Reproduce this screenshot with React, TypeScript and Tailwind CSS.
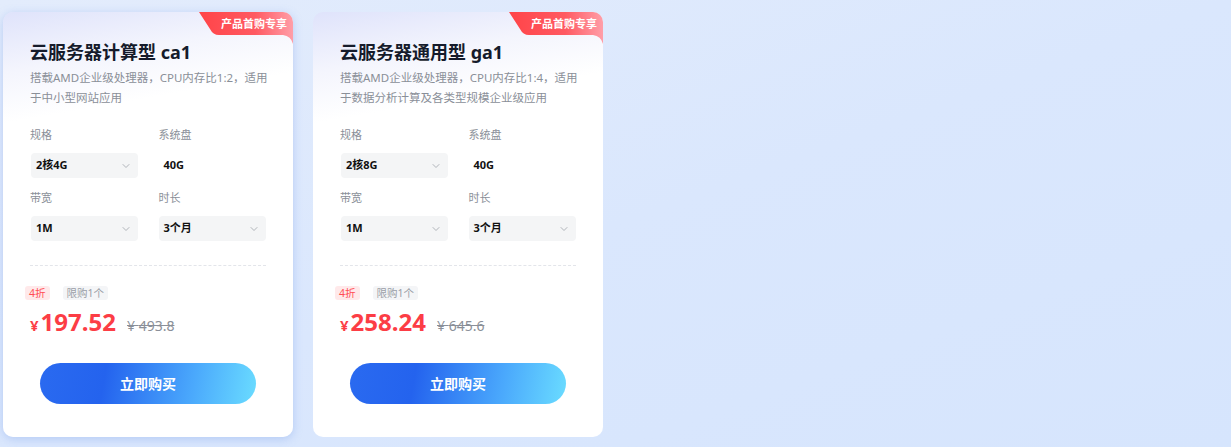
import { ChevronDown } from 'lucide-react';

const products = [
  {
    name: '云服务器计算型 ca1',
    desc: '搭载AMD企业级处理器，CPU内存比1:2，适用于中小型网站应用',
    spec: '2核4G',
    price: '197.52',
    origin: '493.8',
    active: true,
  },
  {
    name: '云服务器通用型 ga1',
    desc: '搭载AMD企业级处理器，CPU内存比1:4，适用于数据分析计算及各类型规模企业级应用',
    spec: '2核8G',
    price: '258.24',
    origin: '645.6',
    active: false,
  },
];

const SelectBox = ({ value }) => (
  <div className="flex h-[25px] items-center justify-between rounded-[4px] bg-[#f4f5f6] pl-[5px] pr-[6px]">
    <span className="text-[11px] font-bold text-[#111]">{value}</span>
    <ChevronDown size={12} strokeWidth={1.5} className="text-[#9a9ea6]" />
  </div>
);

const Badge = () => (
  <div className="absolute right-0 top-0 h-[32px] w-[94px]">
    <svg width="94" height="32" viewBox="0 0 94 32" className="absolute inset-0">
      <defs>
        <linearGradient id="badgeGrad" x1="0" y1="0" x2="1" y2="0">
          <stop offset="0%" stopColor="#ff4448" />
          <stop offset="60%" stopColor="#ff5a62" />
          <stop offset="100%" stopColor="#ff9ea8" />
        </linearGradient>
      </defs>
      <path d="M0 0 H94 V32 Q92 24 84 23 H20 Q14 23 11 17 Z" fill="url(#badgeGrad)" />
    </svg>
    <span className="absolute left-[22px] top-[4px] text-[11px] font-bold leading-[15px] text-white">产品首购专享</span>
  </div>
);

const ProductCard = ({ p }) => (
  <div
    className={`relative flex w-[290px] flex-col overflow-hidden rounded-[10px] bg-[linear-gradient(170deg,#dfe3fb_0%,#f4f5fd_60px,#ffffff_110px)] px-[27px] pb-[33px] pt-[26px] ${
      p.active ? 'shadow-[0_2px_10px_rgba(110,150,230,0.35)]' : ''
    }`}
  >
    <Badge />
    <h3 className="text-[18px] font-bold leading-[28px] text-[#151b2b]">{p.name}</h3>
    <p className="-mr-[8px] mt-[2px] h-[40px] text-[11.5px] leading-[19.5px] text-[#8a8f98]">{p.desc}</p>

    <div className="mt-[19px] grid grid-cols-2 gap-x-[21px]">
      <div className="flex flex-col">
        <span className="text-[11px] leading-[16px] text-[#8a8f98]">规格</span>
        <div className="mt-[10px] pl-[1px]">
          <SelectBox value={p.spec} />
        </div>
      </div>
      <div className="flex flex-col">
        <span className="text-[11px] leading-[16px] text-[#8a8f98]">系统盘</span>
        <div className="mt-[10px] flex h-[25px] items-center pl-[5px] text-[11px] font-bold text-[#111]">40G</div>
      </div>
      <div className="mt-[12px] flex flex-col">
        <span className="text-[11px] leading-[16px] text-[#8a8f98]">带宽</span>
        <div className="mt-[10px] pl-[1px]">
          <SelectBox value="1M" />
        </div>
      </div>
      <div className="mt-[12px] flex flex-col">
        <span className="text-[11px] leading-[16px] text-[#8a8f98]">时长</span>
        <div className="mt-[10px]">
          <SelectBox value="3个月" />
        </div>
      </div>
    </div>

    <div className="mt-[24px] border-t border-dashed border-[#e3e5ea]" />

    <div className="-ml-[5px] mt-[20px] flex items-center gap-[13px]">
      <span className="rounded-[3px] bg-[#ffe9ea] px-[4px] text-[10.5px] leading-[14px] text-[#ff4d55]">4折</span>
      <span className="rounded-[3px] bg-[#f4f5f7] px-[4px] text-[10.5px] leading-[14px] text-[#9a9ea6]">限购1个</span>
    </div>

    <div className="mt-[6px] flex items-baseline">
      <span className="text-[15px] font-bold text-[#fc3d45]">¥</span>
      <span className="ml-[2px] text-[24px] font-bold leading-[32px] text-[#fc3d45]">{p.price}</span>
      <span className="ml-[11px] text-[14px] text-[#8a8f98] line-through">¥ {p.origin}</span>
    </div>

    <button className="mx-auto mt-[25px] h-[41px] w-[216px] rounded-full bg-[linear-gradient(100deg,#2a6af0_0%,#2463ee_30%,#4aa8fc_70%,#6adcff_100%)] text-[14px] font-bold text-white">
      立即购买
    </button>
  </div>
);

export default function App() {
  return (
    <div className="h-[447px] w-[1231px] bg-[linear-gradient(160deg,#e3ecfc_0%,#dae7fd_50%,#d6e5fd_100%)] font-['Noto_Sans','Noto_Sans_CJK_SC',sans-serif]">
      <div className="flex gap-[20px] pl-[3px] pt-[12px]">
        {products.map((p) => (
          <ProductCard key={p.name} p={p} />
        ))}
      </div>
    </div>
  );
}
